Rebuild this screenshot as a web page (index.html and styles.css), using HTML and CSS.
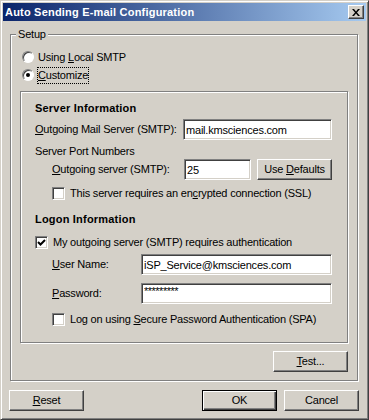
FILE: index.html
```html
<!DOCTYPE html>
<html lang="en">
<head>
  <meta charset="UTF-8" />
  <title>Auto Sending E-mail Configuration</title>
  <link rel="stylesheet" href="styles.css">
</head>
<body>

<div class="window">
  <div class="titlebar">
    <span class="title">Auto Sending E-mail Configuration</span>
    <button class="close" type="button">
      <svg width="8" height="7" viewBox="0 0 8 7"><path d="M0 0h2l2 2.4 2-2.4h2l-3 3.5 3 3.5h-2l-2-2.4-2 2.4h-2l3-3.5z" fill="#000"/></svg>
    </button>
  </div>

  <div class="group setup">
    <div class="group-title">Setup</div>
    <div class="radios">
      <label class="radio-row"><span class="radio"></span><span>Using <u>L</u>ocal SMTP</span></label>
      <label class="radio-row"><span class="radio checked"></span><span class="focus"><u>C</u>ustomize</span></label>
    </div>

    <div class="group panel">
      <div class="section">Server Information</div>
      <div class="row row-server">
        <span class="label wide"><u>O</u>utgoing Mail Server (SMTP):</span>
        <input class="edit" type="text" value="mail.kmsciences.com">
      </div>
      <div class="note">Server Port Numbers</div>
      <div class="row row-port">
        <span class="label port"><u>O</u>utgoing server (SMTP):</span>
        <input class="edit short" type="text" value="25">
        <button class="btn" type="button">Use <u>D</u>efaults</button>
      </div>
      <label class="check-row indent ssl"><span class="check"></span><span>This server requires an en<u>c</u>rypted connection (SSL)</span></label>

      <div class="section logon">Logon Information</div>
      <label class="check-row auth">
        <span class="check"><svg width="11" height="11" viewBox="0 0 11 11"><polyline points="2,5 4.5,7.5 9,3" fill="none" stroke="#000" stroke-width="2"/></svg></span>
        <span>My outgoing server (SMTP) requires authentication</span>
      </label>
      <div class="row row-user">
        <span class="label user"><u>U</u>ser Name:</span>
        <input class="edit" type="text" value="iSP_Service@kmsciences.com">
      </div>
      <div class="row row-pass">
        <span class="label user"><u>P</u>assword:</span>
        <input class="edit pass" type="text" value="*********">
      </div>
      <label class="check-row indent spa"><span class="check"></span><span>Log on using <u>S</u>ecure Password Authentication (SPA)</span></label>
    </div>

    <div class="test-row">
      <button class="btn" type="button"><u>T</u>est...</button>
    </div>
  </div>

  <div class="footer">
    <button class="btn" type="button"><u>R</u>eset</button>
    <span class="spacer"></span>
    <button class="btn default" type="button">OK</button>
    <button class="btn" type="button">Cancel</button>
  </div>
</div>

</body>
</html>
```

FILE: styles.css
```css
* {
  box-sizing: border-box;
}

body {
  margin: 0;
  background-color: #d4d0c8;
  font-family: "Liberation Sans", Arial, sans-serif;
  font-size: 11px;
  line-height: 13px;
  letter-spacing: -0.2px;
  color: #000;
}

.window {
  width: 369px;
  height: 420px;
  padding: 2px;
  background-color: #d4d0c8;
  border: 1px solid;
  border-color: #d4d0c8 #404040 #404040 #d4d0c8;
  box-shadow: inset 1px 1px #fff, inset -1px -1px #808080;
}

.titlebar {
  height: 18px;
  display: flex;
  align-items: center;
  justify-content: space-between;
  padding: 0 2px;
  background: linear-gradient(to right, #0a246a, #a6caf0);
}

.title {
  color: #fff;
  font-weight: bold;
  letter-spacing: 0.2px;
}

.close {
  width: 16px;
  height: 14px;
  padding: 0;
  display: flex;
  align-items: center;
  justify-content: center;
  background-color: #d4d0c8;
  border: 1px solid;
  border-color: #fff #404040 #404040 #fff;
  box-shadow: inset -1px -1px #808080;
}

/* etched group boxes */
.group {
  border: 1px solid #808080;
  box-shadow: inset 1px 1px #fff, 1px 1px #fff;
}

.setup {
  margin: 13px 8px 0 7px;
  padding-bottom: 8px;
}

.group-title {
  width: fit-content;
  margin: -7px 0 0 5px;
  padding: 0 2px;
  background-color: #d4d0c8;
}

.radios {
  padding: 7px 0 0 11px;
}

.radio-row {
  height: 18px;
  display: flex;
  align-items: center;
  gap: 4px;
}

.radio {
  width: 12px;
  height: 12px;
  border-radius: 50%;
  background-color: #fff;
  border: 1px solid;
  border-color: #808080 #fff #fff #808080;
  box-shadow: inset 1px 1px #404040;
  display: flex;
  align-items: center;
  justify-content: center;
}

.radio.checked::after {
  content: "";
  width: 4px;
  height: 4px;
  border-radius: 50%;
  background-color: #000;
}

.focus {
  margin-left: -1px;
  padding: 1px 0;
  border: 1px dotted #000;
}

.panel {
  margin: 7px 9px 0 9px;
  padding: 10px 15px 16px 14px;
}

.section {
  font-weight: bold;
  letter-spacing: 0.2px;
}

.row {
  display: flex;
  align-items: center;
}

.row-server {
  margin-top: 4px;
}

.note {
  margin-top: 5px;
}

.row-port {
  margin-top: 1px;
  padding-left: 17px;
}

.label.wide {
  width: 148px;
}

.label.port {
  width: 132px;
}

.label.user {
  width: 89px;
}

.row-user {
  margin-top: 5px;
  padding-left: 17px;
}

.row-pass {
  margin-top: 8px;
  padding-left: 17px;
}

.edit {
  flex: 1;
  height: 21px;
  padding: 0 2px;
  font: inherit;
  letter-spacing: inherit;
  color: #000;
  background-color: #fff;
  border: 1px solid;
  border-color: #808080 #fff #fff #808080;
  box-shadow: inset 1px 1px #404040, inset -1px -1px #d4d0c8;
  outline: none;
}

.edit.short {
  flex: none;
  width: 67px;
  margin-right: 6px;
}

.edit.pass {
  padding-bottom: 5px;
  letter-spacing: -0.5px;
}

.check-row {
  display: flex;
  align-items: center;
  gap: 5px;
}

.check-row.indent {
  padding-left: 17px;
}

.ssl {
  margin-top: 7px;
}

.logon {
  margin-top: 13px;
}

.auth {
  margin-top: 10px;
}

.spa {
  margin-top: 9px;
}

.check {
  width: 13px;
  height: 13px;
  flex: none;
  display: flex;
  align-items: center;
  justify-content: center;
  background-color: #fff;
  border: 1px solid;
  border-color: #808080 #fff #fff #808080;
  box-shadow: inset 1px 1px #404040, inset -1px -1px #d4d0c8;
}

.btn {
  width: 75px;
  height: 21px;
  flex: none;
  padding: 0;
  font: inherit;
  letter-spacing: inherit;
  color: #000;
  background-color: #d4d0c8;
  border: 1px solid;
  border-color: #fff #404040 #404040 #fff;
  box-shadow: inset -1px -1px #808080;
}

.btn.default {
  border: 1px solid #000;
  box-shadow: inset 1px 1px #fff, inset -1px -1px #404040, inset -2px -2px #808080;
}

.test-row {
  display: flex;
  justify-content: flex-end;
  margin: 8px 9px 0 0;
}

.footer {
  display: flex;
  gap: 7px;
  margin: 9px 7px 0 6px;
}

.spacer {
  flex: 1;
}
```
